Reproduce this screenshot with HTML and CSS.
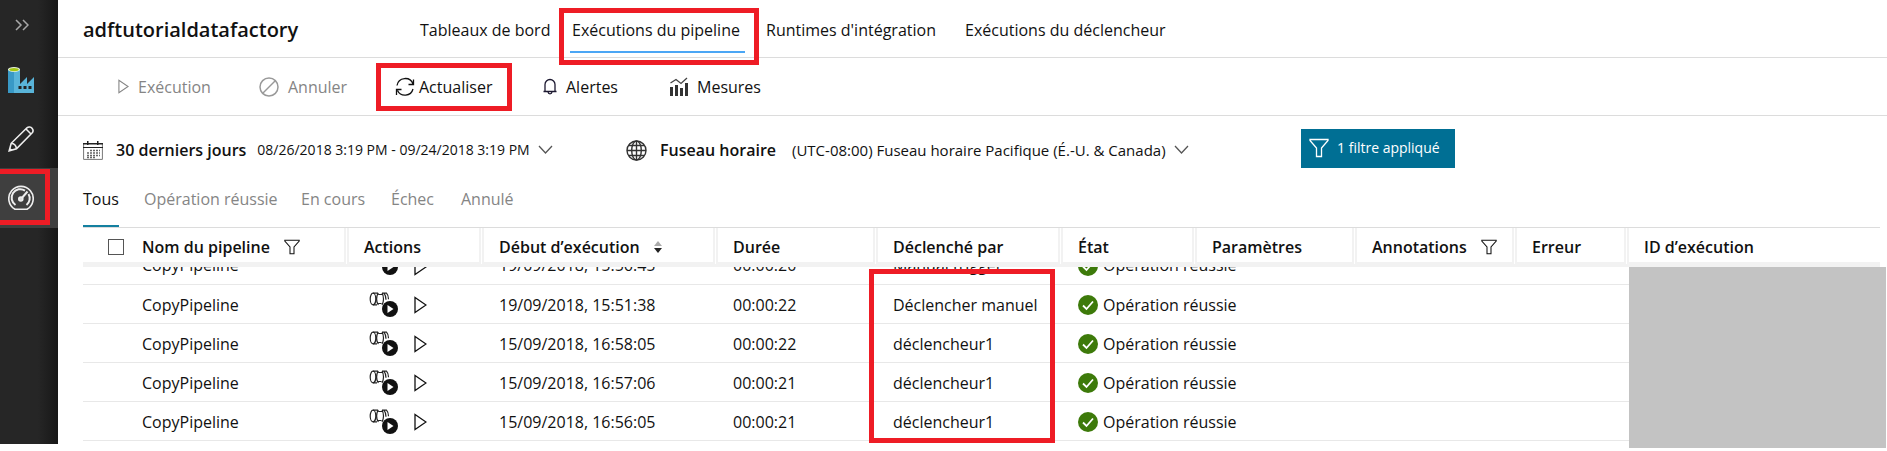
FILE: index.html
```html
<!DOCTYPE html>
<html lang="fr">
<head>
<meta charset="utf-8">
<title>adftutorialdatafactory</title>
<link rel="stylesheet" href="styles.css">
</head>
<body>
<svg class="defs" aria-hidden="true">
  <symbol id="funnel" viewBox="0 0 20 20"><path d="M1 1.5h18v1L12.500 10v8.500h-5V10L1 2.500z"/></symbol>
  <symbol id="chevron" viewBox="0 0 15 10"><path d="M1 1l6.500 7L14 1"/></symbol>
  <symbol id="play" viewBox="0 0 13 18"><path d="M1 1.500v15L12 9z"/></symbol>
  <symbol id="activity" viewBox="0 0 30 26">
    <g fill="none" stroke="#222" stroke-width="1.200">
      <ellipse cx="4" cy="7" rx="2.800" ry="5.800"/>
      <path d="M4 1.200h5M4 12.800h4M9.500 1.200c-2.500 2-2.500 9.600 0 11.600M9.500 2.500h4M9.500 11.500h3M13 1.200c2 3 2 8.500 0 11.600M13 1.200h4.500c1.500 1.500 2 3.500 2 6M15 1.200c1.500 2 2 4 2 6.500"/>
    </g>
    <circle cx="21" cy="17" r="8" fill="#111"/><path d="M18.500 13v8l6-4z" fill="#fff"/>
  </symbol>
  <symbol id="ok" viewBox="0 0 20 20"><circle cx="10" cy="10" r="10" fill="#3d7a0a"/><path d="M5 10.500l3.500 3.500 6.500-7.500" fill="none" stroke="#fff" stroke-width="1.800"/></symbol>
</svg>
<div class="app">
  <aside class="sidebar">
    <button class="side-item side-toggle" aria-label="Développer"><svg width="14" height="12" viewBox="0 0 14 12"><path d="M1 1l5 5-5 5M8 1l5 5-5 5" fill="none" stroke="#a8a8a8" stroke-width="1.500"/></svg></button>
    <button class="side-item" aria-label="Fabrique de données"><svg width="26" height="26" viewBox="0 0 26 26"><path d="M0 2h12v24H0z" fill="#3999c6"/><path d="M6 3h6v14l7-7v7l7-7v16H6z" fill="#59b4d9"/><ellipse cx="6" cy="2.500" rx="6" ry="2.500" fill="#e8f2dc"/><ellipse cx="6" cy="2.600" rx="4.800" ry="1.600" fill="#a4c614"/><path d="M10.500 19h3v3h-3zM15.500 19h3v3h-3zM20.500 19h3v3h-3z" fill="#222"/></svg></button>
    <button class="side-item" aria-label="Créer"><svg width="26" height="26" viewBox="0 0 26 26" fill="none" stroke="#eee" stroke-width="1.600"><path d="M1.200 24.800l2-7.500L19 1.800c1.600-1.500 4-.8 5 .4 1.300 1.500 1.300 3.400 0 4.800L8.500 22.700zM3.200 17.300c2.800.2 4.800 2.200 5.300 5.400M18 3l5 5M1.800 22.500l1.700 1.700"/></svg></button>
    <button class="side-item active marked" aria-label="Surveiller"><svg width="26" height="26" viewBox="0 0 26 26" fill="none" stroke="#eee" stroke-width="1.600"><path d="M7 24.200a12.200 12.200 0 1 1 12 0z"/><path d="M7.500 20A8.500 8.500 0 0 1 17 5.600M20.500 9A8.500 8.500 0 0 1 18.500 20" stroke-width="2"/><path d="M13 14l6.500-7.500" stroke-width="2"/><circle cx="12.800" cy="14" r="2" fill="#ddd"/></svg></button>
  </aside>
  <main class="main">
    <header class="header">
      <h1 class="title">adftutorialdatafactory</h1>
      <nav class="nav">
        <a href="#">Tableaux de bord</a>
        <a href="#" class="current marked">Exécutions du pipeline</a>
        <a href="#">Runtimes d'intégration</a>
        <a href="#">Exécutions du déclencheur</a>
      </nav>
    </header>
    <div class="toolbar">
      <button class="tool" disabled><svg class="line-icon" width="11" height="15"><use href="#play"/></svg>Exécution</button>
      <button class="tool" disabled><svg width="20" height="20" viewBox="0 0 20 20" fill="none" stroke="#999" stroke-width="1.500"><circle cx="10" cy="10" r="9"/><path d="M4 16L16 4"/></svg>Annuler</button>
      <button class="tool tight marked"><svg width="20" height="20" viewBox="0 0 20 20" fill="none" stroke="#111" stroke-width="1.300"><path d="M2 8.500A8.300 8.300 0 0 1 18 7M18.500 2.500V7.500h-5M18 12A8.300 8.300 0 0 1 2.500 13.500M1.500 18V12.500h5"/></svg>Actualiser</button>
      <button class="tool"><svg width="14" height="17" viewBox="0 0 14 17" fill="none" stroke="#1c1830" stroke-width="1.300"><path d="M.5 13.500h13M2 13V6.500a5 5 0 0 1 10 0V13M5 14c.3 2.500 3.700 2.500 4 0"/></svg>Alertes</button>
      <button class="tool"><svg width="18" height="19" viewBox="0 0 18 19"><path d="M0 10h3v9H0zM5 8h3v11H5zM10 11h3v8h-3zM15 6h3v13h-3z" fill="#333"/><path d="M.5 6L6 2.500l5 4L17 1" fill="none" stroke="#444" stroke-width="1.300"/></svg>Mesures</button>
    </div>
    <div class="filters">
      <button class="picker range"><svg width="20" height="19" viewBox="0 0 20 19"><path d="M.6 3v15.400h18.800V3" fill="none" stroke="#777"/><path d="M0 2h20v1.500H0zM0 6h20v1H0zM4 0h1.500v4H4zM14 0h1.500v4H14z" fill="#222"/><path d="M7 9.500h10M4 12h13M4 14.500h13M4 16.500h9" stroke="#666" stroke-width="1.300" stroke-dasharray="2 1"/></svg><b>30 derniers jours</b><span>08/26/2018 3:19 PM - 09/24/2018 3:19 PM</span><svg class="chevron" width="15" height="10"><use href="#chevron"/></svg></button>
      <button class="picker zone"><svg width="21" height="21" viewBox="0 0 21 21" fill="none" stroke="#333" stroke-width="1.400"><circle cx="10.500" cy="10.500" r="9.500"/><ellipse cx="10.500" cy="10.500" rx="4.800" ry="9.500"/><path d="M10.500 1v19M1 10.500h19M2.500 5.500h16M2.500 15.500h16"/></svg><b>Fuseau horaire</b><span>(UTC-08:00) Fuseau horaire Pacifique (É.-U. &amp; Canada)</span><svg class="chevron" width="15" height="10"><use href="#chevron"/></svg></button>
      <button class="applied"><svg width="20" height="20"><use href="#funnel"/></svg>1 filtre appliqué</button>
    </div>
    <nav class="tabs">
      <a href="#" class="current">Tous</a><a href="#">Opération réussie</a><a href="#">En cours</a><a href="#">Échec</a><a href="#">Annulé</a>
    </nav>
    <div class="grid">
      <table class="runs">
        <colgroup><col class="c-name"><col class="c-actions"><col class="c-start"><col class="c-mid"><col class="c-by"><col class="c-state"><col class="c-mid"><col class="c-mid"><col class="c-error"><col></colgroup>
        <thead>
          <tr>
            <th><div class="cell"><input type="checkbox" class="check" aria-label="Tout sélectionner">Nom du pipeline<svg class="line-icon funnel" width="16" height="16"><use href="#funnel"/></svg></div></th>
            <th>Actions</th>
            <th><div class="cell sort">Début d’exécution<svg width="8" height="13" viewBox="0 0 8 13"><path d="M0 5l4-5 4 5z" fill="#aaa"/><path d="M0 7h8l-4 5z" fill="#222"/></svg></div></th>
            <th>Durée</th><th>Déclenché par</th><th>État</th><th>Paramètres</th>
            <th><div class="cell sort">Annotations<svg class="line-icon funnel" width="16" height="16"><use href="#funnel"/></svg></div></th>
            <th>Erreur</th><th>ID d’exécution</th>
          </tr>
        </thead>
        <tbody>
          <tr class="cut">
            <td><div class="cell">CopyPipeline</div></td>
            <td><div class="cell acts"><svg width="30" height="26"><use href="#activity"/></svg><svg class="line-icon" width="13" height="18"><use href="#play"/></svg></div></td>
            <td><div class="cell">19/09/2018, 15:56:45</div></td><td><div class="cell">00:00:20</div></td><td><div class="cell">Manual trigger</div></td>
            <td colspan="4"><div class="cell state"><svg width="20" height="20"><use href="#ok"/></svg>Opération réussie</div></td>
            <td rowspan="5" class="hidden-ids"></td>
          </tr>
          <tr>
            <td>CopyPipeline</td>
            <td><div class="cell acts"><button aria-label="Activités"><svg width="30" height="26"><use href="#activity"/></svg></button><button aria-label="Réexécuter"><svg class="line-icon" width="13" height="18"><use href="#play"/></svg></button></div></td>
            <td>19/09/2018, 15:51:38</td><td>00:00:22</td><td class="mark-start">Déclencher manuel</td>
            <td colspan="4"><div class="cell state"><svg width="20" height="20"><use href="#ok"/></svg>Opération réussie</div></td>
          </tr>
          <tr>
            <td>CopyPipeline</td>
            <td><div class="cell acts"><button aria-label="Activités"><svg width="30" height="26"><use href="#activity"/></svg></button><button aria-label="Réexécuter"><svg class="line-icon" width="13" height="18"><use href="#play"/></svg></button></div></td>
            <td>15/09/2018, 16:58:05</td><td>00:00:22</td><td>déclencheur1</td>
            <td colspan="4"><div class="cell state"><svg width="20" height="20"><use href="#ok"/></svg>Opération réussie</div></td>
          </tr>
          <tr>
            <td>CopyPipeline</td>
            <td><div class="cell acts"><button aria-label="Activités"><svg width="30" height="26"><use href="#activity"/></svg></button><button aria-label="Réexécuter"><svg class="line-icon" width="13" height="18"><use href="#play"/></svg></button></div></td>
            <td>15/09/2018, 16:57:06</td><td>00:00:21</td><td>déclencheur1</td>
            <td colspan="4"><div class="cell state"><svg width="20" height="20"><use href="#ok"/></svg>Opération réussie</div></td>
          </tr>
          <tr>
            <td>CopyPipeline</td>
            <td><div class="cell acts"><button aria-label="Activités"><svg width="30" height="26"><use href="#activity"/></svg></button><button aria-label="Réexécuter"><svg class="line-icon" width="13" height="18"><use href="#play"/></svg></button></div></td>
            <td>15/09/2018, 16:56:05</td><td>00:00:21</td><td>déclencheur1</td>
            <td colspan="4"><div class="cell state"><svg width="20" height="20"><use href="#ok"/></svg>Opération réussie</div></td>
          </tr>
        </tbody>
      </table>
    </div>
  </main>
</div>
</body>
</html>
```
FILE: styles.css
```css
*, *::before, *::after { box-sizing: border-box; }
body {
  margin: 0;
  min-height: 100vh;
  background: #fff;
  color: #111;
  font: 16px/22px "Open Sans", "Noto Sans", sans-serif;
}
button {
  font: inherit;
  color: inherit;
  background: none;
  border: 0;
  padding: 0;
  white-space: nowrap;
}
a { color: inherit; text-decoration: none; white-space: nowrap; }
svg { display: block; flex: none; }
b, th { font-weight: 600; }
.defs { position: absolute; width: 0; height: 0; }
.line-icon { fill: none; stroke: currentColor; stroke-width: 1.3; }
.app { display: flex; }

.sidebar {
  flex: none;
  width: 58px;
  margin-bottom: -3px;
  background: linear-gradient(to right, #262626 65%, #171717);
}
.side-item {
  display: flex;
  align-items: center;
  width: 100%;
  height: 59px;
  padding-left: 8px;
}
.side-toggle { height: 50px; padding-left: 15px; }
.side-item.active { height: 60px; background: #3f3f3f; }

/* red call-out frames */
.marked { position: relative; }
.marked::after, .mark-start::after {
  content: "";
  position: absolute;
  border: 5px solid #ee1c25;
  pointer-events: none;
}
.side-item.marked::after { inset: 1px 8px 3px -5px; }
.nav .marked::after { inset: 8px -19px -8px -13px; }
.tool.marked::after { inset: -13px -20px -13px -19px; }
.mark-start { position: relative; }
.mark-start::after { width: 186px; height: 174px; top: -16px; left: -9px; z-index: 1; }

.main { flex: 1; min-width: 0; }
.header {
  display: flex;
  height: 58px;
  border-bottom: 1px solid #dcdcdc;
  padding-left: 25px;
}
.title { margin: 0; width: 337px; font-size: 20px; line-height: 60px; font-weight: 600; }
.nav { display: grid; grid-template-columns: 152px 194px 199px auto; grid-template-rows: 100%; line-height: 60px; }
.nav a { justify-self: start; }
.nav .current::before {
  content: "";
  position: absolute;
  left: -2px;
  right: -5px;
  top: 51px;
  height: 2px;
  background: #4ba6f5;
}
.toolbar {
  display: grid;
  grid-template-columns: 141px 136px 148px 127px auto;
  align-items: center;
  height: 58px;
  padding-left: 60px;
  border-bottom: 1px solid #dcdcdc;
}
.tool { display: flex; align-items: center; gap: 9px; justify-self: start; }
.tool.tight { gap: 4px; }
.tool:disabled { color: #858585; }

.filters { display: flex; align-items: center; height: 68px; padding-left: 25px; }
.picker { display: flex; align-items: center; }
.range { width: 543px; }
.zone { width: 675px; }
.picker b { margin: 0 11px 0 13px; }
.zone b { margin-right: 16px; }
.range span { font-size: 14px; }
.zone span { font-size: 15px; }
.chevron { fill: none; stroke: #555; stroke-width: 1.3; margin-left: 8px; }
.applied {
  display: flex;
  align-items: center;
  gap: 8px;
  width: 154px;
  height: 39px;
  margin-bottom: 4px;
  padding-left: 8px;
  background: #006f94;
  color: #fff;
  font-size: 14px;
}
.applied svg { fill: none; stroke: #fff; stroke-width: 1.3; }

.tabs {
  display: grid;
  grid-template-columns: 61px 157px 90px 70px auto;
  margin-left: 25px;
  height: 43px;
  line-height: 30px;
  color: #858585;
}
.tabs a { justify-self: start; }
.tabs .current { color: #111; border-bottom: 2px solid #1480a0; }

.grid { margin: 0 7px 0 25px; border-top: 1px solid #dcdcdc; }
.runs { width: 100%; table-layout: fixed; border-collapse: separate; border-spacing: 0; }
.c-name { width: 266px; }
.c-actions { width: 135px; }
.c-start { width: 234px; }
.c-mid { width: 160px; }
.c-by { width: 185px; }
.c-state { width: 134px; }
.c-error { width: 112px; }
th, td { padding: 2px 0 0 15px; text-align: left; white-space: nowrap; }
th { height: 39px; padding-top: 4px; border-right: 5px double #f2f2f2; border-bottom: 5px solid #f2f2f2; }
th:last-child { border-right: 0; }
td { height: 39px; border-bottom: 1px solid #e8e8e8; }
th:first-child { padding-left: 25px; }
td:first-child { padding-left: 59px; }
.cell { display: flex; align-items: center; }
.check {
  appearance: none;
  width: 16px;
  height: 16px;
  margin: 0 18px 0 0;
  border: 1px solid #555;
}
.funnel { margin-left: 14px; }
.sort { gap: 14px; }
.sort .funnel { margin-left: 0; }
.acts { gap: 15px; padding-left: 5px; }
.state { gap: 5px; }
.cut td { height: 18px; padding-top: 0; }
.cut .cell { height: 17px; overflow: hidden; align-items: flex-end; padding-bottom: 8px; }
.runs .hidden-ids { position: relative; border: 0; }
.hidden-ids::after { content: ""; position: absolute; inset: 0 -6px -7px 0; background: #c3c3c3; }
```
